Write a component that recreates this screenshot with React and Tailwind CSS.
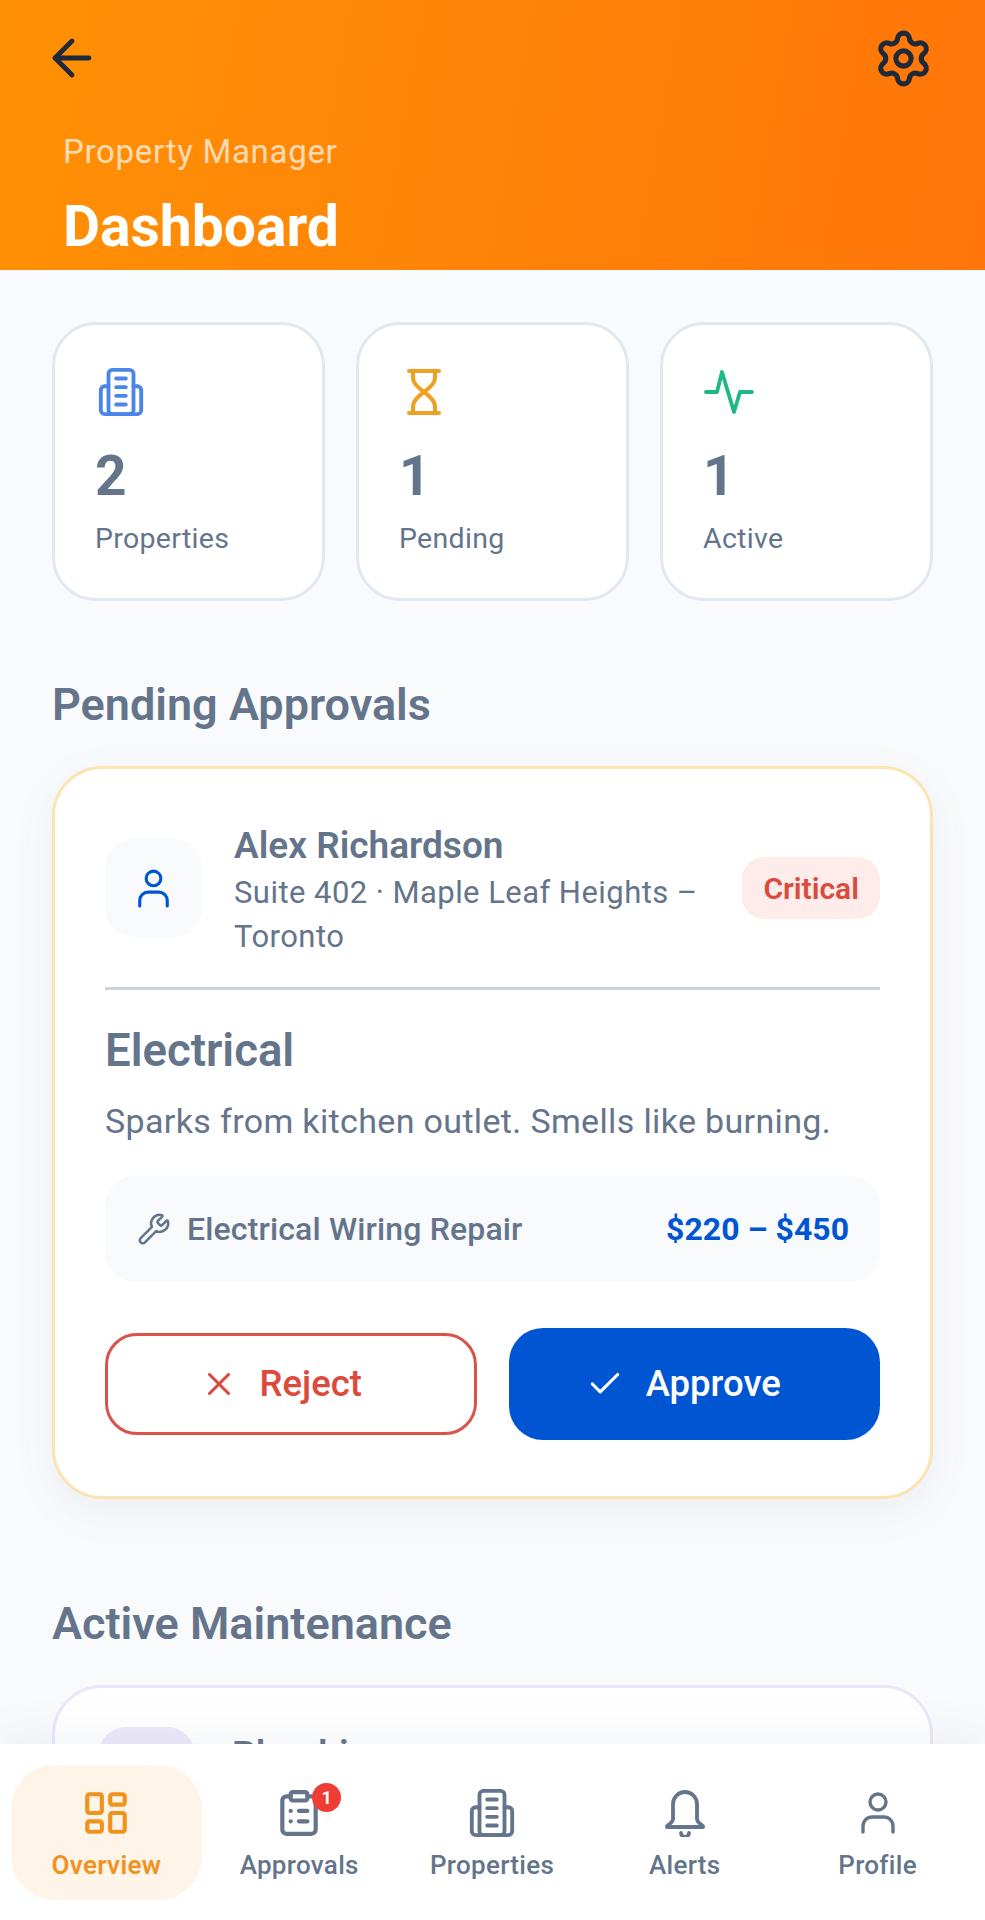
import React from 'react';
import { ArrowLeft, Settings, Wrench, X, Check, LayoutDashboard, ClipboardList } from 'lucide-react';

const Tower = ({ className }) => (
  <svg viewBox="0 0 48 52" fill="none" stroke="currentColor" strokeWidth="4" strokeLinecap="round" strokeLinejoin="round" className={className}>
    <rect x="11" y="3" width="26" height="46" rx="4" />
    <path d="M11 20H7a4 4 0 0 0-4 4v21a4 4 0 0 0 4 4h34a4 4 0 0 0 4-4V24a4 4 0 0 0-4-4h-4" />
    <path d="M19 12h10M19 21h10M19 30h10M19 39h10" />
  </svg>
);

const Hourglass = ({ className }) => (
  <svg viewBox="0 0 36 48" fill="none" stroke="currentColor" strokeWidth="4" strokeLinecap="round" strokeLinejoin="round" className={className}>
    <path d="M3 3h30M3 45h30" />
    <path d="M7 3v7c0 5 4 9 11 14 7 5 11 9 11 14v7" />
    <path d="M29 3v7c0 5-4 9-11 14-7 5-11 9-11 14v7" />
  </svg>
);

const Pulse = ({ className }) => (
  <svg viewBox="0 0 50 46" fill="none" stroke="currentColor" strokeWidth="3.8" strokeLinecap="round" strokeLinejoin="round" className={className}>
    <path d="M2 23h11l5-20 12 40 6-20h12" />
  </svg>
);

const Person = ({ className }) => (
  <svg viewBox="0 0 36 42" fill="none" stroke="currentColor" strokeWidth="3.4" strokeLinecap="round" strokeLinejoin="round" className={className}>
    <circle cx="18" cy="10" r="8" />
    <path d="M3 40v-6a9 9 0 0 1 9-9h12a9 9 0 0 1 9 9v6" />
  </svg>
);

const BellIcon = ({ className }) => (
  <svg viewBox="0 0 42 48" fill="none" stroke="currentColor" strokeWidth="3.8" strokeLinecap="round" strokeLinejoin="round" className={className}>
    <path d="M9 30V15a12 12 0 0 1 24 0v15c0 3 3 5 6 7v1H3v-1c3-2 6-4 6-7z" />
    <path d="M17 44a4 4 0 0 0 8 0" />
  </svg>
);

const stats = [
  { icon: <Tower className="w-[52px] h-[50px] text-[#4A86E8]" />, value: '2', label: 'Properties' },
  { icon: <Hourglass className="w-[36px] h-[50px] ml-[7px] text-[#F0A020]" />, value: '1', label: 'Pending' },
  { icon: <Pulse className="w-[50px] h-[46px] ml-[1px] text-[#1DB884]" />, value: '1', label: 'Active' },
];

const navItems = [
  { label: 'Overview', icon: <LayoutDashboard className="w-[50px] h-[50px]" strokeWidth={2} />, active: true },
  { label: 'Approvals', icon: <ClipboardList className="w-[50px] h-[50px]" strokeWidth={2} />, badge: '1' },
  { label: 'Properties', icon: <Tower className="w-[48px] h-[50px]" /> },
  { label: 'Alerts', icon: <BellIcon className="w-[42px] h-[48px]" /> },
  { label: 'Profile', icon: <Person className="w-[36px] h-[44px]" /> },
];

export default function App() {
  return (
    <div className="h-[1920px] flex flex-col overflow-hidden bg-[#F8FAFC] font-['Roboto',sans-serif]">
      {/* header */}
      <header className="h-[270px] shrink-0 bg-[linear-gradient(100deg,#FF9105,#FF750A)] pl-[43px] pr-[51px] pt-[28px]">
        <div className="flex items-center justify-between h-[60px] text-[#1F2937]">
          <ArrowLeft className="w-[58px] h-[58px]" strokeWidth={2} />
          <Settings className="w-[61px] h-[61px]" strokeWidth={2} />
        </div>
        <p className="ml-[20px] mt-[42px] text-[33px] leading-[44px] tracking-[0.7px] text-white/70">Property Manager</p>
        <h1 className="ml-[20px] mt-[21px] text-[57px] leading-[64px] font-bold text-white">Dashboard</h1>
      </header>

      <main className="flex-1 overflow-hidden px-[52px] pt-[52px]">
        <div className="grid grid-cols-3 gap-[31px]">
          {stats.map((s) => (
            <div key={s.label} className="h-[279px] rounded-[44px] border-[3px] border-[#E2E8F0] bg-white pl-[40px] pt-[42px]">
              <div className="h-[50px] flex items-center">{s.icon}</div>
              <div className="mt-[27px] text-[55px] leading-[64px] font-bold text-[#64748B]">{s.value}</div>
              <div className="mt-[9px] text-[28.5px] leading-[44px] tracking-[0.3px] text-[#64748B]">{s.label}</div>
            </div>
          ))}
        </div>

        <h2 className="mt-[76px] text-[45px] leading-[56px] font-semibold text-[#64748B]">Pending Approvals</h2>

        <section className="mt-[33px] h-[733px] rounded-[50px] border-[3px] border-[#FDE3B0] bg-white px-[50px] pt-[50px] shadow-[0_12px_40px_rgba(100,116,139,0.08)]">
          <div className="flex items-start">
            <div className="mt-[20px] w-[97px] h-[98px] shrink-0 rounded-[28px] bg-[#F8FAFC] flex items-center justify-center">
              <Person className="w-[33px] h-[39px] text-[#0056D2]" />
            </div>
            <div className="ml-[32px] mt-[5px] flex-1 min-w-0">
              <div className="text-[37px] leading-[44px] font-semibold text-[#64748B]">Alex Richardson</div>
              <div className="mt-[3px] text-[31px] leading-[44px] tracking-[0.45px] text-[#64748B]">Suite 402 · Maple Leaf Heights – Toronto</div>
            </div>
            <span className="mt-[38px] ml-[36px] shrink-0 h-[62px] px-[21px] rounded-[22px] bg-[#FDECEA] flex items-center text-[30px] font-semibold text-[#DC4A3D]">Critical</span>
          </div>

          <div className="mt-[28px] h-[3px] bg-[#CDD1DC]" />

          <h3 className="mt-[33px] text-[45.5px] leading-[56px] font-semibold text-[#64748B]">Electrical</h3>
          <p className="mt-[19px] text-[34px] leading-[46px] tracking-[0.35px] text-[#64748B]">Sparks from kitchen outlet. Smells like burning.</p>

          <div className="mt-[32px] h-[106px] rounded-[30px] bg-[#F8FAFC] flex items-center justify-between pl-[32px] pr-[31px]">
            <div className="flex items-center gap-[16px] text-[#64748B]">
              <Wrench className="w-[34px] h-[34px]" strokeWidth={1.8} />
              <span className="text-[32px] tracking-[0.15px] font-medium">Electrical Wiring Repair</span>
            </div>
            <span className="text-[32px] font-bold text-[#0056D2]">$220 – $450</span>
          </div>

          <div className="mt-[46px] grid grid-cols-2 gap-[32px] items-center">
            <button className="h-[102px] pr-[20px] rounded-[32px] border-[3px] border-[#D9534A] bg-white flex items-center justify-center gap-[22px] text-[36.5px] font-medium text-[#DC4A3D]">
              <X className="w-[38px] h-[38px]" strokeWidth={2} />
              Reject
            </button>
            <button className="h-[112px] pr-[22px] rounded-[34px] bg-[#0056D2] flex items-center justify-center gap-[22px] text-[36.5px] font-medium text-white">
              <Check className="w-[38px] h-[38px]" strokeWidth={2} />
              Approve
            </button>
          </div>
        </section>

        <h2 className="mt-[97px] text-[45px] leading-[56px] font-semibold text-[#64748B]">Active Maintenance</h2>

        <section className="mt-[33px] h-[400px] rounded-[50px] border-[3px] border-[#EBE6FA] bg-white px-[43px] pt-[39px]">
          <div className="flex items-start">
            <div className="w-[97px] h-[98px] shrink-0 rounded-[28px] bg-[#EDE9FA]" />
            <div className="ml-[37px] mt-[6px] text-[37px] leading-[44px] font-semibold text-[#64748B]">Plumbing</div>
          </div>
        </section>
      </main>

      {/* bottom nav */}
      <nav className="relative h-[176px] shrink-0 bg-white pl-[11px] pr-[10px] pt-[21px] flex shadow-[0_-10px_40px_rgba(100,116,139,0.07)]">
        {navItems.map((n) => (
          <div
            key={n.label}
            className={`w-[191px] h-[135px] mr-[2px] rounded-[44px] flex flex-col items-center pt-[23px] ${n.active ? 'bg-[#FFF4E8] text-[#F0931E]' : 'text-[#64748B]'}`}
          >
            <div className="relative h-[50px] flex items-center justify-center">
              {n.icon}
              {n.badge && (
                <span className="absolute -top-[5px] -right-[17px] w-[29px] h-[29px] rounded-full bg-[#EF3D36] text-white text-[18px] font-bold flex items-center justify-center">{n.badge}</span>
              )}
            </div>
            <span className={`mt-[9px] text-[26px] leading-[36px] tracking-[0.3px] ${n.active ? 'font-semibold' : 'font-medium'}`}>{n.label}</span>
          </div>
        ))}
      </nav>
    </div>
  );
}
